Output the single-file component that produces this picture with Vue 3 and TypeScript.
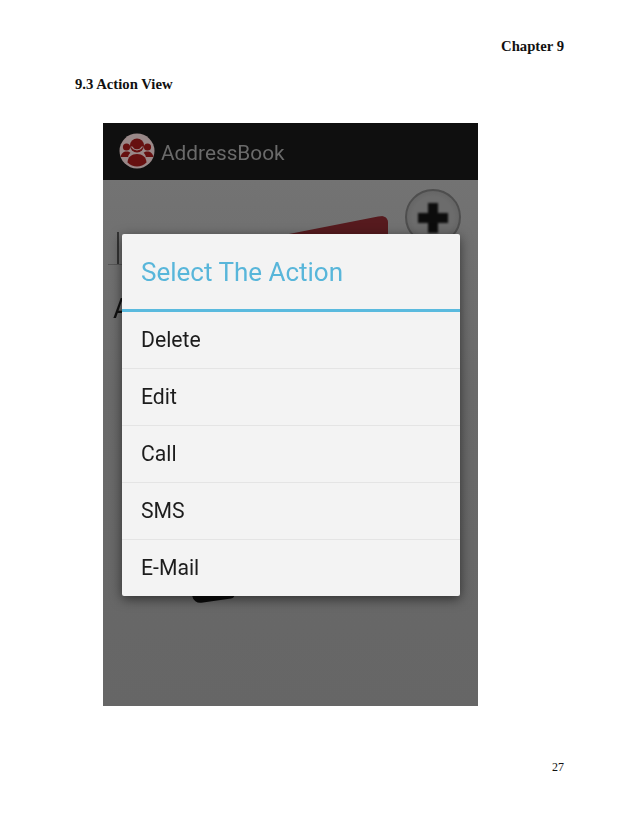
<script setup lang="ts">
const actions: string[] = ['Delete', 'Edit', 'Call', 'SMS', 'E-Mail']
</script>

<template>
  <main class="page">
    <header class="chapter">Chapter 9</header>
    <h2 class="section">9.3 Action View</h2>
    <section class="phone">
      <div class="appbar">
        <svg class="logo" viewBox="0 0 36 36" aria-hidden="true">
          <circle cx="18" cy="18" r="17.5" fill="#998888" />
          <g fill="#661010">
            <circle cx="7.5" cy="14" r="3.6" />
            <circle cx="28.5" cy="14" r="3.6" />
            <path d="M1.6 24c.5-3.6 3-5.6 6-5.6 1.6 0 2.8.5 3.8 1.3-1.3 1.2-2 2.6-2.3 4.3z" />
            <path d="M34.4 24c-.5-3.6-3-5.6-6-5.6-1.6 0-2.8.5-3.8 1.3 1.3 1.2 2 2.6 2.3 4.3z" />
            <circle cx="18" cy="12.5" r="7" />
            <path d="M8.5 29.5c.3-5.600 4.200-8.500 9.500-8.500s9.200 2.900 9.500 8.500c-2.700 2.600-6 4-9.500 4s-6.800-1.400-9.500-4z" />
          </g>
          <path d="M12.500 13.500c1.500 2.300 3.300 3.300 5.500 3.300s4-1 5.500-3.300" fill="none" stroke="#998888" stroke-width="1.300" />
        </svg>
        <span class="app-name">AddressBook</span>
      </div>
      <div class="content">
        <span class="red-button"></span>
        <span class="add-button">
          <svg viewBox="0 0 30 30" aria-hidden="true">
            <path d="M15 0v30M0 15h30" stroke="#0c0c0c" stroke-width="10" fill="none" />
          </svg>
        </span>
        <span class="input-caret"></span>
        <span class="input-line"></span>
        <span class="behind-letter">A</span>
        <span class="black-button"></span>
        <div class="dialog">
          <div class="dialog-title">Select The Action</div>
          <ul class="action-list">
            <li v-for="action in actions" :key="action" class="action">{{ action }}</li>
          </ul>
        </div>
      </div>
    </section>
    <footer class="page-number">27</footer>
  </main>
</template>

<style scoped>
.page {
  width: 638px;
  height: 826px;
  box-sizing: border-box;
  padding: 39px 74px 0 75px;
  background: #fff;
  display: flex;
  flex-direction: column;
  font-family: "Liberation Serif", serif;
  color: #111;
  overflow: hidden;
}
.chapter {
  align-self: flex-end;
  font-size: 14.7px;
  font-weight: 700;
  line-height: 15px;
}
.section {
  margin: 23px 0 0;
  font-size: 14.7px;
  font-weight: 700;
  line-height: 15px;
}
.phone {
  margin: 31px 0 0 28px;
  width: 375px;
  height: 583px;
  display: flex;
  flex-direction: column;
  background: #6a6a6a;
  font-family: Roboto, "Noto Sans", sans-serif;
  filter: blur(0.45px);
}
.appbar {
  height: 57px;
  flex: none;
  display: flex;
  align-items: center;
  gap: 6px;
  padding-left: 16px;
  background: #0f0f0f;
}
.logo {
  width: 36px;
  height: 36px;
  margin-top: -1px;
}
.app-name {
  font-size: 20.8px;
  color: #6a6a6a;
  margin-top: 3px;
}
.content {
  position: relative;
  flex: 1;
  background: linear-gradient(#737373 0, #6a6a6a 40%, #666 100%);
}
.red-button {
  position: absolute;
  left: 186px;
  top: 36px;
  width: 99px;
  height: 40px;
  border-radius: 0 6px 0 0;
  background: #561a1e;
  clip-path: polygon(0 45%, 90% 1%, 95% 0, 98% 3%, 100% 10%, 100% 100%, 0 100%);
}
.add-button {
  position: absolute;
  left: 302px;
  top: 9px;
  width: 56px;
  height: 56px;
  box-sizing: border-box;
  border-radius: 50%;
  border: 2px solid #4e4e4e;
  background: radial-gradient(circle at 50% 50%, #6c6c6c 55%, #5a5a5a 100%);
  display: flex;
  align-items: center;
  justify-content: center;
}
.add-button svg {
  width: 30px;
  height: 30px;
  margin-top: 2px;
  filter: blur(0.8px);
}
.input-caret {
  position: absolute;
  left: 14px;
  top: 52px;
  width: 2px;
  height: 32px;
  background: #333;
}
.input-line {
  position: absolute;
  left: 5px;
  top: 84px;
  width: 14px;
  height: 1px;
  background: #555;
}
.behind-letter {
  position: absolute;
  left: 10px;
  top: 114px;
  font-size: 27px;
  line-height: 30px;
  color: #111;
}
.black-button {
  position: absolute;
  left: 89px;
  top: 404px;
  width: 42px;
  height: 17px;
  border-radius: 0 0 4px 8px;
  background: #0c0c0c;
  transform: rotate(-8deg);
}
.dialog {
  position: absolute;
  left: 19px;
  top: 54px;
  width: 338px;
  height: 362px;
  border-radius: 2px;
  background: #f3f3f3;
  box-shadow: 0 3px 12px rgba(0, 0, 0, 0.55);
  display: flex;
  flex-direction: column;
}
.dialog-title {
  flex: none;
  height: 78px;
  box-sizing: border-box;
  padding: 21px 0 0 19px;
  border-bottom: 3px solid #5abade;
  font-size: 26px;
  line-height: 34px;
  color: #58b6da;
  white-space: nowrap;
}
.action-list {
  list-style: none;
  margin: 0;
  padding: 0;
  flex: 1;
  display: flex;
  flex-direction: column;
}
.action {
  flex: 1;
  display: flex;
  align-items: center;
  padding-left: 19px;
  padding-bottom: 1px;
  font-size: 21.2px;
  color: #1c1c1c;
  border-top: 1px solid #e4e4e4;
}
.action:first-child {
  border-top: 0;
}
.page-number {
  align-self: flex-end;
  margin-top: 54px;
  font-size: 12px;
  line-height: 14px;
}
</style>
